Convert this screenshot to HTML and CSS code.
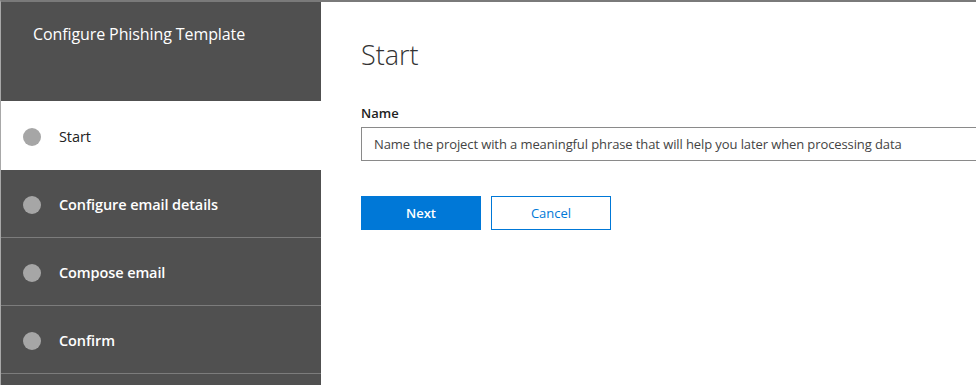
FILE: index.html
```html
<!DOCTYPE html>
<html>
    <head>
        <title>Configure Phishing Template</title>
        <meta name="viewport" content="width=device-width, initial-scale=1">
        <link rel="stylesheet" href="styles.css">
    </head>
    <body>
        <div class="wizard">
            <div class="sidebar">
                <div class="sidebar-title">Configure Phishing Template</div>
                <ul class="steps">
                    <li class="step current"><span class="dot"></span>Start</li>
                    <li class="step"><span class="dot"></span>Configure email details</li>
                    <li class="step"><span class="dot"></span>Compose email</li>
                    <li class="step"><span class="dot"></span>Confirm</li>
                </ul>
            </div>
            <div class="content">
                <h1>Start</h1>
                <label class="field-label" for="name">Name</label>
                <input class="field" type="text" id="name" placeholder="Name the project with a meaningful phrase that will help you later when processing data">
                <div class="actions">
                    <button class="btn primary">Next</button>
                    <button class="btn">Cancel</button>
                </div>
            </div>
        </div>
    </body>
</html>
```

FILE: styles.css
```css
html, body { margin: 0; padding: 0; }
body { font-family: "Open Sans", "Noto Sans", sans-serif; color: #333; background: #fff; overflow: hidden; }

.wizard { display: flex; height: 385px; border-top: 2px solid #7a7a7a; border-left: 1px solid #a8a8a8; box-sizing: border-box; }

.sidebar { width: 320px; flex: none; background: #505050; color: #fff; }
.sidebar-title { height: 99px; box-sizing: border-box; padding: 21px 0 0 32px; font-size: 16px; letter-spacing: -0.1px; }

.steps { list-style: none; margin: 0; padding: 0; }
.step { display: flex; align-items: center; height: 68px; box-sizing: border-box; padding: 2px 0 0 22px; border-bottom: 1px solid #7c7c7c; font-size: 14.5px; font-weight: 600; letter-spacing: -0.1px; }
.step.current { background: #fff; color: #222; font-weight: 400; border-bottom: none; height: 69px; }
.dot { width: 18px; height: 18px; border-radius: 50%; background: #a6a6a6; margin-right: 18px; }

.content { flex: 1; padding: 0 0 0 40px; min-width: 0; }
.content h1 { margin: 35px 0 0; font-size: 27px; font-weight: 300; color: #333; line-height: 36px; }
.field-label { display: block; margin-top: 31px; font-size: 13px; font-weight: 600; color: #222; }
.field { display: block; width: 700px; height: 34px; margin-top: 5px; box-sizing: border-box; border: 1px solid #8a8a8a; padding: 0 12px; font-family: inherit; font-size: 13px; letter-spacing: -0.1px; color: #333; }
.field::placeholder { color: #444; }

.actions { display: flex; gap: 10px; margin-top: 35px; }
.btn { width: 120px; height: 34px; box-sizing: border-box; border: 1px solid #0078d7; background: #fff; color: #0078d7; font-family: inherit; font-size: 13px; }
.btn.primary { background: #0078d7; color: #fff; font-weight: 600; }
```
